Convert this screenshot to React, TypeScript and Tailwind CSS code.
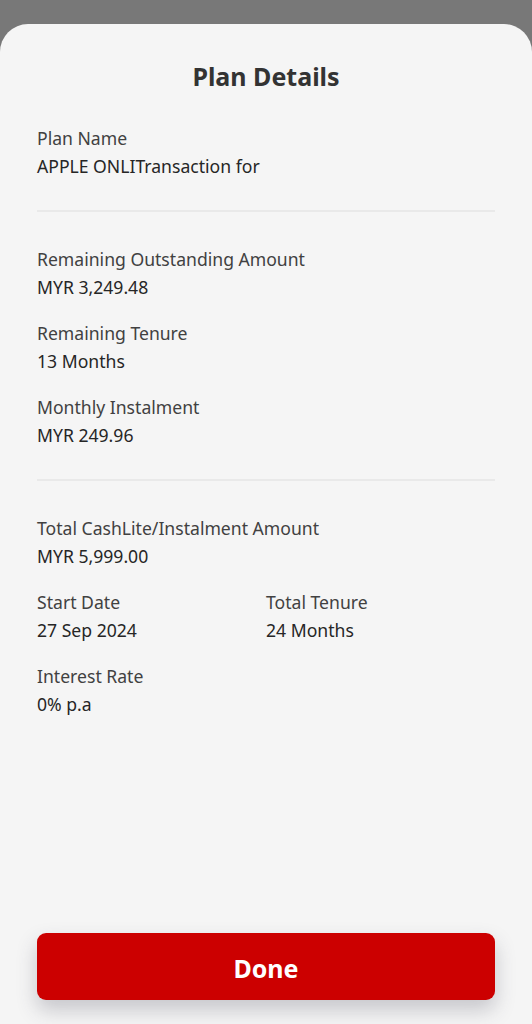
import React from "react";

type Item = { label: string; value: string };

function Field({ label, value }: Item) {
  return (
    <div className="flex flex-col">
      <span className="text-[17.6px] leading-[28px] text-[#414141]">{label}</span>
      <span className="text-[17.6px] leading-[28px] text-[#262626]">{value}</span>
    </div>
  );
}

export default function App() {
  return (
    <div
      className="min-h-screen w-full bg-[#787878] pt-[24px] flex flex-col"
      style={{ fontFamily: '"Noto Sans", "Open Sans", sans-serif' }}
    >
      <div className="flex-1 flex flex-col bg-[#f5f5f5] rounded-t-[28px] px-[37px]">
        <h1 className="mt-[36px] text-center text-[25px] leading-[32px] font-bold text-[#333333]">
          Plan Details
        </h1>

        {/* Plan name */}
        <div className="mt-[32px]">
          <Field label="Plan Name" value="APPLE ONLITransaction for" />
        </div>

        <div className="mt-[30px] h-[2px] bg-[#e9e9e9]" />

        {/* Current balance */}
        <div className="mt-[33px] flex flex-col gap-[18px]">
          <Field label="Remaining Outstanding Amount" value="MYR 3,249.48" />
          <Field label="Remaining Tenure" value="13 Months" />
          <Field label="Monthly Instalment" value="MYR 249.96" />
        </div>

        <div className="mt-[30px] h-[2px] bg-[#e9e9e9]" />

        {/* Original plan */}
        <div className="mt-[33px] flex flex-col gap-[18px]">
          <Field label="Total CashLite/Instalment Amount" value="MYR 5,999.00" />
          <div className="grid grid-cols-2">
            <Field label="Start Date" value="27 Sep 2024" />
            <Field label="Total Tenure" value="24 Months" />
          </div>
          <Field label="Interest Rate" value="0% p.a" />
        </div>

        <div className="mt-auto pb-[24px]">
          <button
            type="button"
            className="w-full h-[67px] rounded-[9px] bg-[#cc0000] text-white text-[25px] leading-[34px] pt-[3px] font-bold shadow-[0_10px_20px_rgba(60,60,80,0.25)]"
          >
            Done
          </button>
        </div>
      </div>
    </div>
  );
}
